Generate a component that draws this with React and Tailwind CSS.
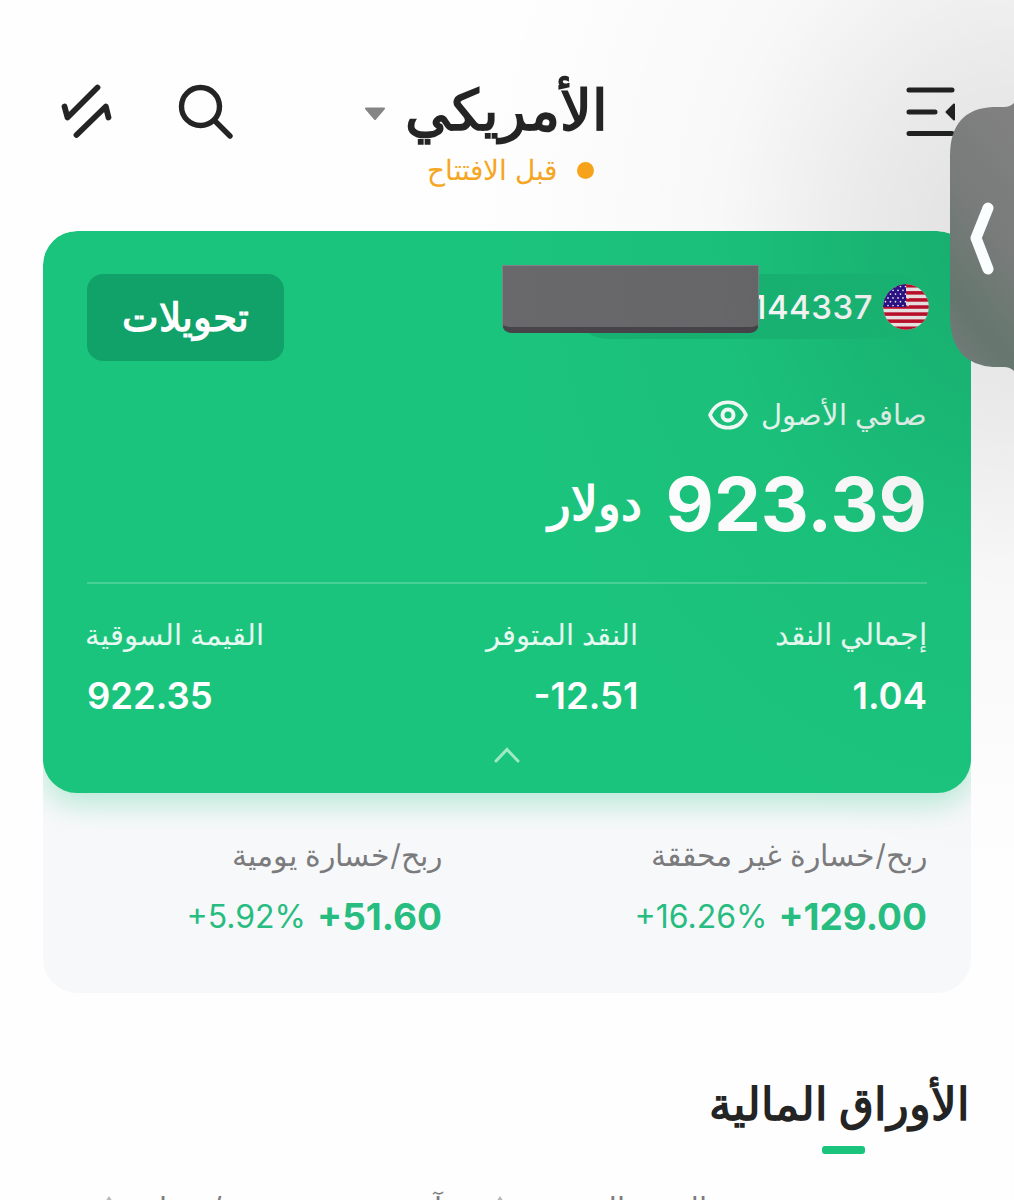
import React from 'react';

const profits = [
  { label: 'ربح/خسارة غير محققة', value: '+129.00', percent: '+16.26%' },
  { label: 'ربح/خسارة يومية', value: '+51.60', percent: '+5.92%' },
];

function TransferIcon() {
  return (
    <svg width="52" height="56" viewBox="0 0 52 56" fill="none" stroke="#242424" strokeWidth="5.8" strokeLinecap="round" strokeLinejoin="round">
      <path d="M36.500 4.500 6.500 34.500 3.500 23.500" />
      <path d="M15.500 52 44.800 23.500 47.500 34.500" />
    </svg>
  );
}

function SearchIcon() {
  return (
    <svg width="56" height="56" viewBox="0 0 56 56" fill="none" stroke="#242424" strokeWidth="5.4" strokeLinecap="round">
      <circle cx="22.5" cy="23.5" r="19" />
      <path d="M37 38 52 53" />
    </svg>
  );
}

function MenuIcon() {
  return (
    <svg width="50" height="50" viewBox="0 0 50 50" fill="none" stroke="#242424" strokeWidth="5" strokeLinecap="round">
      <path d="M3 3H46M3 25H29M3 46.500H46" />
      <path d="M40.500 25 48 17.500V32.500Z" fill="#242424" strokeWidth="2" strokeLinejoin="round" />
    </svg>
  );
}

function FlagIcon() {
  const stars = [];
  for (let row = 0; row < 6; row++) {
    for (let col = 0; col < 5; col++) {
      stars.push(<circle key={`${row}-${col}`} cx={2.5 + col * 5 + (row % 2) * 2.5} cy={2.5 + row * 3.8} r="0.85" fill="#fff" />);
    }
  }
  return (
    <svg width="46" height="46" viewBox="0 0 46 46">
      <clipPath id="flag">
        <circle cx="23" cy="23" r="22.8" />
      </clipPath>
      <g clipPath="url(#flag)">
        <rect width="46" height="46" fill="#fbf4f4" />
        {[0, 1, 2, 3, 4, 5, 6].map((i) => (
          <rect key={i} y={i * 7.08} width="46" height="3.54" fill="#c8102e" />
        ))}
        <rect width="23" height="23" fill="#2d1390" />
        {stars}
      </g>
    </svg>
  );
}

function Header() {
  return (
    <header className="flex h-[231px] justify-between pt-[80px] pr-[58px] pl-[61px]">
      <div className="pt-[7px]">
        <MenuIcon />
      </div>
      <div className="mr-[170px] flex w-[243px] flex-col">
        <div className="flex h-[68px] items-center justify-between">
          <h1 className="mr-[-1px] pb-[8px] text-[55.500px] leading-[50px] font-bold text-[#242424]">الأمريكي</h1>
          <svg width="22" height="14" viewBox="0 0 22 14">
            <path d="M2 1.500H20L11 12Z" fill="#858585" stroke="#858585" strokeWidth="2" strokeLinejoin="round" />
          </svg>
        </div>
        <div className="flex h-[42px] items-center gap-[20px] pt-[2px] pr-[13px]">
          <span className="size-[17px] rounded-full bg-[#f9a51b]" />
          <span className="pb-[1px] text-[28px] text-[#f5a623]">قبل الافتتاح</span>
        </div>
      </div>
      <div className="flex w-[173px] justify-between pt-[3px]">
        <SearchIcon />
        <TransferIcon />
      </div>
    </header>
  );
}

function AccountCard() {
  return (
    <section className="relative h-[562px] rounded-[34px] bg-[#1bc47d] px-[44px] pt-[43px] text-white shadow-[0_12px_28px_rgba(27,196,125,0.28)]">
      <div className="flex h-[87px] justify-between">
        <div className="relative flex h-[65px] w-[352px] items-center rounded-[32px] bg-linear-to-r from-[#15a86b]/60 from-40% to-transparent">
          <div className="mr-[-2px]">
            <FlagIcon />
          </div>
          <span className="mr-[10px] pt-[2px] text-[33px] font-medium tracking-[0.5px]" dir="ltr">144337</span>
          <div className="absolute top-[-9px] right-[168px] h-[68px] w-[257px] rounded-b-[9px] border border-b-[6px] border-[#83818b] border-b-[#48454a] bg-[#69686a]" />
        </div>
        <button className="h-[87px] w-[197px] rounded-[16px] bg-[#11a269] text-[39px] font-semibold">تحويلات</button>
      </div>
      <div className="mt-[29px] flex h-[50px] items-center gap-[13px]">
        <span className="text-[29px] text-white/90">صافي الأصول</span>
        <svg width="40" height="30" viewBox="0 0 40 30" fill="none" stroke="#fff" strokeOpacity="0.95">
          <path d="M2 15C6 6 12 2.200 20 2.200S34 6 38 15C34 24 28 27.800 20 27.800S6 24 2 15Z" strokeWidth="3.6" strokeLinejoin="round" />
          <circle cx="20" cy="15" r="5.500" strokeWidth="4" />
        </svg>
      </div>
      <div className="flex h-[142px] items-center gap-[24px] pb-[13px]">
        <span className="text-[74.500px] leading-none font-bold">923.39</span>
        <span className="pb-[3px] text-[47px] font-semibold">دولار</span>
      </div>
      <div className="h-[2px] bg-white/20" />
      <div className="flex pt-[23px] whitespace-nowrap">
        <div className="w-[289px]">
          <p className="h-[54px] text-[29.500px] leading-[54px] text-white/90">إجمالي النقد</p>
          <p className="h-[66px] text-[36.500px] leading-[70px] font-semibold"><span dir="ltr">1.04</span></p>
        </div>
        <div className="w-[375px]">
          <p className="h-[54px] text-[29px] leading-[55px] text-white/90">النقد المتوفر</p>
          <p className="h-[66px] text-[36.500px] leading-[70px] font-semibold"><span className="inline-block" dir="ltr">-12.51</span></p>
        </div>
        <div className="w-[177px]">
          <p className="h-[54px] text-[29px] leading-[55px] text-white/90">القيمة السوقية</p>
          <p className="h-[66px] text-left text-[36.500px] leading-[70px] font-semibold" dir="ltr">922.35</p>
        </div>
      </div>
      <svg className="mx-auto mt-[19px]" width="28" height="18" viewBox="0 0 28 18" fill="none" stroke="#a0e8c6" strokeWidth="3" strokeLinecap="round">
        <path d="M3 15 14 3.500 25 15" />
      </svg>
    </section>
  );
}

function ProfitPanel() {
  return (
    <section className="mt-[-40px] flex h-[240px] bg-[#f7f8fa] pt-[75px] pr-[44px] whitespace-nowrap">
      {profits.map((item) => (
        <div key={item.label} className="w-[485px] shrink-0">
          <p className="h-[54px] text-[29.500px] leading-[54px] text-[#7b7b7d]">{item.label}</p>
          <p className="flex h-[70px] items-center gap-[11px] text-[#27bd81]">
            <span className="text-[37px] font-bold" dir="ltr">{item.value}</span>
            <span className="text-[32px]" dir="ltr">{item.percent}</span>
          </p>
        </div>
      ))}
    </section>
  );
}

function SortMark() {
  return (
    <svg width="16" height="22" viewBox="0 0 16 22" fill="#b9b9b9">
      <path d="M8 0 14 9H2Z" />
    </svg>
  );
}

function Securities() {
  return (
    <section className="pt-[82px] pr-[44px] whitespace-nowrap">
      <div className="w-[252px]">
        <h2 className="h-[71px] text-[44.500px] leading-[58px] font-bold text-[#242424]">الأوراق المالية</h2>
        <div className="mr-[105px] h-[8px] w-[43px] rounded-[3px] bg-[#1bc47d]" />
      </div>
      <div className="mt-[29px] flex h-[56px] pr-[263px] text-[29px] leading-[50px] text-[#7b7b7d]">
        <div className="flex w-[265px] shrink-0 justify-between pl-[50px]">
          <span>القيمة السوقية</span>
          <div className="pt-[13px]">
            <SortMark />
          </div>
        </div>
        <div className="w-[179px] shrink-0">آخر سعر</div>
        <div className="flex w-[162px] shrink-0 justify-between">
          <span>ربح/خسارة</span>
          <div className="pt-[13px]">
            <SortMark />
          </div>
        </div>
      </div>
    </section>
  );
}

export default function App() {
  return (
    <div dir="rtl" className="relative h-[1200px] w-[1014px] overflow-hidden bg-[#fefefe] font-[Inter,'Noto_Sans',sans-serif]">
      <Header />
      <main className="mx-[43px] overflow-hidden rounded-[34px]">
        <AccountCard />
        <ProfitPanel />
      </main>
      <Securities />
      {/* Edge shade and pull-out handle */}
      <div className="pointer-events-none absolute top-0 right-0 h-[900px] w-[560px] bg-[radial-gradient(540px_640px_at_560px_237px,rgba(0,0,0,0.12),rgba(0,0,0,0.08)_28%,rgba(0,0,0,0.025)_55%,transparent)]" />
      <svg className="absolute top-[90px] right-0" width="64" height="290" viewBox="0 0 64 290">
        <defs>
          <linearGradient id="handle" x1="0.6" y1="0" x2="0.3" y2="1">
            <stop offset="0" stopColor="#808080" />
            <stop offset="0.45" stopColor="#777b79" />
            <stop offset="0.8" stopColor="#65776f" />
            <stop offset="1" stopColor="#727a77" />
          </linearGradient>
        </defs>
        <path d="M64 13Q60 17 54 17H43Q0 19 0 66V230Q2 274 43 277H54Q60 277 64 281Z" fill="url(#handle)" />
        <path d="M38 118 26 148 38 179" fill="none" stroke="#fafefe" strokeWidth="11" strokeLinecap="round" strokeLinejoin="round" />
      </svg>
    </div>
  );
}
